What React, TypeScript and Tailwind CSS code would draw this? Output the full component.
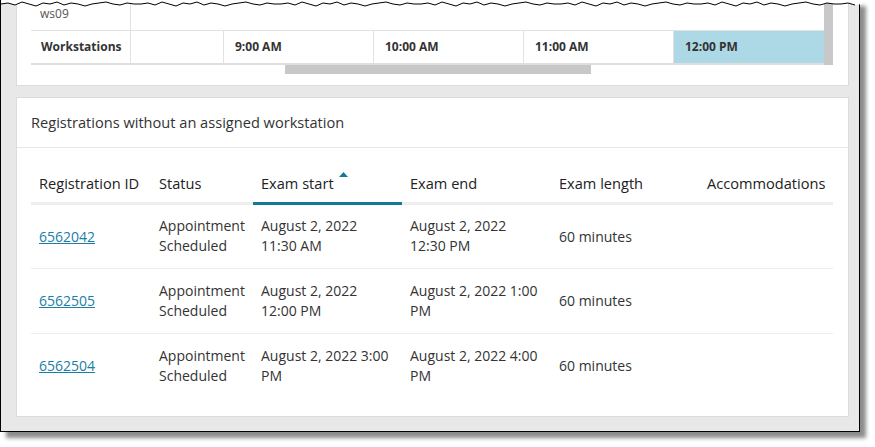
import React from 'react';

const font = { fontFamily: '"Open Sans", "Liberation Sans", sans-serif' };

interface Registration {
  id: string;
  status: string[];
  start: string;
  end: string;
  length: string;
}

const registrations: Registration[] = [
  { id: '6562042', status: ['Appointment', 'Scheduled'], start: 'August 2, 2022 11:30 AM', end: 'August 2, 2022 12:30 PM', length: '60 minutes' },
  { id: '6562505', status: ['Appointment', 'Scheduled'], start: 'August 2, 2022 12:00 PM', end: 'August 2, 2022 1:00 PM', length: '60 minutes' },
  { id: '6562504', status: ['Appointment', 'Scheduled'], start: 'August 2, 2022 3:00 PM', end: 'August 2, 2022 4:00 PM', length: '60 minutes' },
];

// jagged "torn paper" edge along the top of the screenshot frame
function TornEdge() {
  const pts: string[] = [];
  const ys = [4, 3, 5, 2, 4, 6, 3, 4, 2, 5, 3, 4, 6, 4, 3, 2, 4, 5, 3, 4];
  for (let x = 0, i = 0; x <= 860; x += 7, i++) {
    pts.push(`${x},${ys[i % ys.length]}`);
  }
  const line = pts.join(' ');
  return (
    <svg className="absolute left-0 top-0" width="861" height="10" viewBox="0 0 861 10">
      <polygon points={`0,0 ${line} 861,4 861,0`} fill="#ffffff" />
      <polyline points={line} fill="none" stroke="#000" strokeWidth="1" />
    </svg>
  );
}

function ScheduleCard() {
  const times = ['9:00 AM', '10:00 AM', '11:00 AM', '12:00 PM'];
  return (
    <div className="h-[86px] bg-white border border-t-0 border-[#dcdcdc] px-[14px]">
      <div className="flex">
        <div className="w-[793px]">
          <div className="flex h-[31px] border-b border-[#e2e2e2]">
            <div className="w-[100px] border-r border-[#e2e2e2] pl-[9px] pt-[5px] text-[12px] text-[#555]">ws09</div>
          </div>
          <div className="flex h-[34px] border-b-2 border-[#dedede] text-[12px] font-bold text-[#333]">
            <div className="w-[100px] border-r border-[#e2e2e2] pl-[10px] flex items-center">Workstations</div>
            <div className="w-[93px] border-r border-[#e2e2e2]" />
            {times.map((t, i) => (
              <div
                key={t}
                className={
                  i === times.length - 1
                    ? 'w-[150px] bg-[#add8e6] pl-[11px] flex items-center'
                    : 'w-[150px] border-r border-[#e2e2e2] pl-[11px] flex items-center'
                }
              >
                {t}
              </div>
            ))}
          </div>
          <div className="h-[9px] flex">
            <div className="ml-[254px] w-[306px] h-[9px] bg-[#c8c8c8]" />
          </div>
        </div>
        <div className="w-[9px] h-[65px] bg-[#c8c8c8]" />
      </div>
    </div>
  );
}

function RegistrationsCard() {
  return (
    <div className="mt-[11px] h-[320px] bg-white border border-[#dcdcdc]">
      <div className="h-[50px] border-b border-[#e6e6e6] flex items-center px-[14px] text-[14.6px] text-[#333]">
        Registrations without an assigned workstation
      </div>
      <div className="px-[14px] pt-[18px]">
        <table className="table-fixed w-[802px] border-collapse text-[14px] text-[#333]">
          <colgroup>
            <col className="w-[120px]" />
            <col className="w-[102px]" />
            <col className="w-[149px]" />
            <col className="w-[149px]" />
            <col className="w-[149px]" />
            <col className="w-[133px]" />
          </colgroup>
          <thead>
            <tr className="h-[37px] border-b-[3px] border-[#eeeeee] text-[#222] text-[14.6px]">
              <th className="text-left font-normal px-[8px] align-middle">Registration ID</th>
              <th className="text-left font-normal px-[8px] align-middle">Status</th>
              <th className="relative text-left font-normal px-[8px] align-middle">
                Exam start
                <svg className="absolute left-[86px] top-[6px]" width="9" height="5" viewBox="0 0 9 5">
                  <polygon points="0,5 4.5,0 9,5" fill="#127a99" />
                </svg>
                <div className="absolute left-0 right-0 bottom-[-3px] h-[3px] bg-[#127a99]" />
              </th>
              <th className="text-left font-normal px-[8px] align-middle">Exam end</th>
              <th className="text-left font-normal px-[8px] align-middle">Exam length</th>
              <th className="text-left font-normal px-[7px] align-middle whitespace-nowrap">Accommodations</th>
            </tr>
          </thead>
          <tbody>
            {registrations.map((r, i) => (
              <tr
                key={r.id}
                className={i < registrations.length - 1 ? 'h-[65px] border-b border-[#ececec]' : 'h-[65px]'}
              >
                <td className="px-[8px] align-middle">
                  <a href="#" className="text-[#1b7ea6] underline">
                    {r.id}
                  </a>
                </td>
                <td className="px-[8px] align-middle leading-[20px]">
                  {r.status[0]}
                  <br />
                  {r.status[1]}
                </td>
                <td className="px-[8px] align-middle leading-[20px]">{r.start}</td>
                <td className="px-[8px] align-middle leading-[20px]">{r.end}</td>
                <td className="px-[8px] align-middle">{r.length}</td>
                <td className="px-[8px] align-middle" />
              </tr>
            ))}
          </tbody>
        </table>
      </div>
    </div>
  );
}

export default function App() {
  return (
    <div className="w-[875px] h-[447px] bg-white" style={font}>
      <div className="relative w-[860px] h-[432px] bg-[#e8e8e8] border-l border-r border-b border-black shadow-[6px_6px_4px_rgba(0,0,0,0.45)] pl-[15px] pr-[10px]">
        <ScheduleCard />
        <RegistrationsCard />
        <TornEdge />
      </div>
    </div>
  );
}
